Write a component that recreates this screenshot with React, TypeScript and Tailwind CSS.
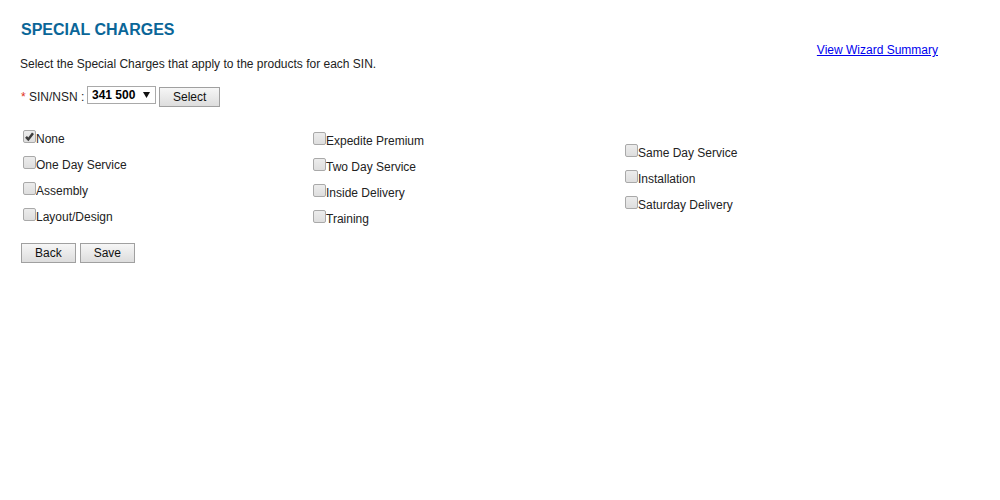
import { useState } from "react";

type Option = { id: string; label: string };

const columns: { offset: string; options: Option[] }[] = [
  {
    offset: "pt-0",
    options: [
      { id: "none", label: "None" },
      { id: "one-day", label: "One Day Service" },
      { id: "assembly", label: "Assembly" },
      { id: "layout", label: "Layout/Design" },
    ],
  },
  {
    offset: "pt-0.5",
    options: [
      { id: "expedite", label: "Expedite Premium" },
      { id: "two-day", label: "Two Day Service" },
      { id: "inside", label: "Inside Delivery" },
      { id: "training", label: "Training" },
    ],
  },
  {
    offset: "pt-3.5",
    options: [
      { id: "same-day", label: "Same Day Service" },
      { id: "installation", label: "Installation" },
      { id: "saturday", label: "Saturday Delivery" },
    ],
  },
];

function PushButton({ children }: { children: string }) {
  return (
    <button
      type="button"
      className="h-5 border border-[#a0a0a0] bg-linear-to-b from-[#f6f6f6] to-[#dddddd] px-[13px] leading-[18px] text-[#111111]"
    >
      {children}
    </button>
  );
}

function ChargeOption({
  option,
  checked,
  onToggle,
}: {
  option: Option;
  checked: boolean;
  onToggle: () => void;
}) {
  return (
    <div className="flex h-[26px] items-start">
      <span className="relative block size-[13px]">
        <input
          id={option.id}
          type="checkbox"
          checked={checked}
          onChange={onToggle}
          className="block size-[13px] appearance-none rounded-[2px] border border-[#a9a9a9] bg-linear-to-b from-[#ececec] to-[#dedede]"
        />
        {checked && (
          <svg
            viewBox="0 0 13 13"
            className="pointer-events-none absolute inset-0 size-[13px]"
            aria-hidden="true"
          >
            <path d="M3 6.8 L5.3 9.4 L10 3.2" fill="none" stroke="#3c3c3c" strokeWidth="2.5" />
          </svg>
        )}
      </span>
      <label htmlFor={option.id} className="pt-0.5 leading-[14px]">
        {option.label}
      </label>
    </div>
  );
}

export default function App() {
  const [selected, setSelected] = useState<string[]>(["none"]);
  const toggle = (id: string) =>
    setSelected((s) => (s.includes(id) ? s.filter((x) => x !== id) : [...s, id]));

  return (
    <main className="bg-white px-5 pt-5 font-['Liberation_Sans',Arial,sans-serif] text-[12px] text-[#222222]">
      <header className="flex items-start justify-between pr-[42px]">
        <div>
          <h1 className="pl-px text-[16px] leading-5 font-bold text-[#0a6698]">SPECIAL CHARGES</h1>
          <p className="mt-4 leading-4">
            Select the Special Charges that apply to the products for each SIN.
          </p>
        </div>
        <a href="#summary" className="mt-[22px] leading-4 text-[#0000ee] underline">
          View Wizard Summary
        </a>
      </header>

      <div className="mt-3.5 flex items-start">
        <label htmlFor="sin" className="w-[67px] pt-[3px] pl-px leading-4">
          <span className="text-[#e03020]">*</span> SIN/NSN :
        </label>
        <span className="relative mr-[3px] block">
          <select
            id="sin"
            className="block h-[18px] w-[69px] appearance-none border border-[#a9a9a9] bg-white pl-1 leading-4 font-bold text-black"
          >
            <option>341 500</option>
          </select>
          <svg
            viewBox="0 0 7 6"
            className="pointer-events-none absolute top-1.5 right-1.5 h-1.5 w-[7px]"
            aria-hidden="true"
          >
            <path d="M0 0H7L3.5 6Z" fill="#111111" />
          </svg>
        </span>
        <div className="pt-px">
          <PushButton>Select</PushButton>
        </div>
      </div>

      <div className="mt-[23px] grid grid-cols-[290fr_312fr_355fr] pl-[3px]">
        {columns.map((column) => (
          <div key={column.offset} className={column.offset}>
            {column.options.map((option) => (
              <ChargeOption
                key={option.id}
                option={option}
                checked={selected.includes(option.id)}
                onToggle={() => toggle(option.id)}
              />
            ))}
          </div>
        ))}
      </div>

      <div className="mt-[7px] flex gap-1 pl-px">
        <PushButton>Back</PushButton>
        <PushButton>Save</PushButton>
      </div>
    </main>
  );
}
